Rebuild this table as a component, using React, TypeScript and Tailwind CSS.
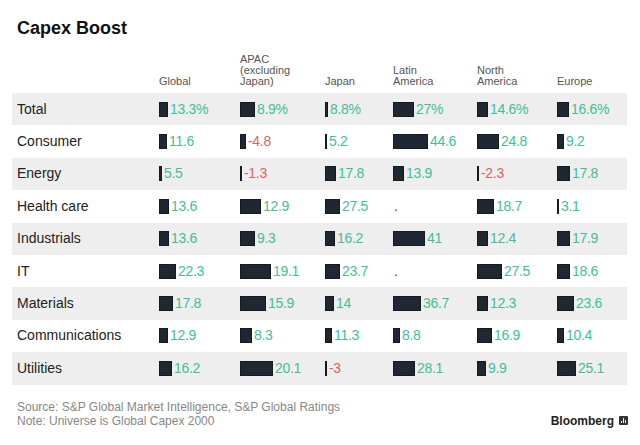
import React from "react";

type Cell = { v: string; w: number; neg?: boolean; dot?: boolean };

const rows: { label: string; cells: Cell[] }[] = [
  { label: "Total", cells: [{ v: "13.3%", w: 9 }, { v: "8.9%", w: 15 }, { v: "8.8%", w: 3 }, { v: "27%", w: 21 }, { v: "14.6%", w: 11 }, { v: "16.6%", w: 12 }] },
  { label: "Consumer", cells: [{ v: "11.6", w: 8 }, { v: "-4.8", w: 6, neg: true }, { v: "5.2", w: 2 }, { v: "44.6", w: 35 }, { v: "24.8", w: 22 }, { v: "9.2", w: 7 }] },
  { label: "Energy", cells: [{ v: "5.5", w: 3 }, { v: "-1.3", w: 2, neg: true }, { v: "17.8", w: 11 }, { v: "13.9", w: 11 }, { v: "-2.3", w: 2, neg: true }, { v: "17.8", w: 13 }] },
  { label: "Health care", cells: [{ v: "13.6", w: 10 }, { v: "12.9", w: 21 }, { v: "27.5", w: 15 }, { v: ".", w: 0, dot: true }, { v: "18.7", w: 17 }, { v: "3.1", w: 2 }] },
  { label: "Industrials", cells: [{ v: "13.6", w: 10 }, { v: "9.3", w: 15 }, { v: "16.2", w: 10 }, { v: "41", w: 32 }, { v: "12.4", w: 11 }, { v: "17.9", w: 13 }] },
  { label: "IT", cells: [{ v: "22.3", w: 17 }, { v: "19.1", w: 31 }, { v: "23.7", w: 15 }, { v: ".", w: 0, dot: true }, { v: "27.5", w: 25 }, { v: "18.6", w: 13 }] },
  { label: "Materials", cells: [{ v: "17.8", w: 14 }, { v: "15.9", w: 26 }, { v: "14", w: 9 }, { v: "36.7", w: 28 }, { v: "12.3", w: 11 }, { v: "23.6", w: 17 }] },
  { label: "Communications", cells: [{ v: "12.9", w: 9 }, { v: "8.3", w: 12 }, { v: "11.3", w: 7 }, { v: "8.8", w: 7 }, { v: "16.9", w: 15 }, { v: "10.4", w: 7 }] },
  { label: "Utilities", cells: [{ v: "16.2", w: 13 }, { v: "20.1", w: 33 }, { v: "-3", w: 2, neg: true }, { v: "28.1", w: 22 }, { v: "9.9", w: 9 }, { v: "25.1", w: 19 }] },
];

const headers: string[][] = [
  ["Global"],
  ["APAC", "(excluding", "Japan)"],
  ["Japan"],
  ["Latin", "America"],
  ["North", "America"],
  ["Europe"],
];

const grid = "grid grid-cols-[147px_81px_85px_68px_84px_80px_70px]";

function ValueCell({ c }: { c: Cell }) {
  if (c.dot) {
    return <div className="flex items-center h-full text-[14px] text-[#444] pl-[1px]">.</div>;
  }
  return (
    <div className="flex items-center h-full">
      <div className="h-[15px] bg-[#1f2832] border border-[#141a20] shrink-0" style={{ width: Math.max(c.w, 2) }} />
      <span className={`ml-[2px] text-[14px] tracking-[-0.3px] ${c.neg ? "text-[#e0625a]" : "text-[#42bf98]"}`}>{c.v}</span>
    </div>
  );
}

export default function App() {
  return (
    <div className="w-[640px] h-[445px] bg-white overflow-hidden font-['Liberation_Sans',Arial,sans-serif] relative">
      <div className="pl-[17px] pt-[15px] text-[18px] leading-[26px] font-bold text-[#111]">Capex Boost</div>
      <div className={`${grid} ml-[12px] w-[615px] h-[47px] items-end pb-[1px]`}>
        <div />
        {headers.map((h, i) => (
          <div key={i} className="text-[11px] leading-[11px] text-[#555] flex flex-col">
            {h.map((l) => (
              <span key={l}>{l}</span>
            ))}
          </div>
        ))}
      </div>
      <div className="ml-[12px] w-[615px] mt-[5px]">
        {rows.map((r, i) => (
          <div key={r.label} className={`${grid} h-[32.4px] ${i % 2 === 0 ? "bg-[#eeeeee]" : "bg-white"}`}>
            <div className="flex items-center pl-[5px] text-[14px] text-[#222]">{r.label}</div>
            {r.cells.map((c, j) => (
              <ValueCell key={j} c={c} />
            ))}
          </div>
        ))}
      </div>
      <div className="flex items-end justify-between pl-[17px] pr-[12px] mt-[15px]">
        <div className="text-[12px] leading-[14px] text-[#888]">
          <div>Source: S&amp;P Global Market Intelligence, S&amp;P Global Ratings</div>
          <div>Note: Universe is Global Capex 2000</div>
        </div>
        <div className="flex items-center gap-[5px] text-[12px] leading-[14px] font-bold text-[#222]">
          <span>Bloomberg</span>
          <svg width="9" height="9" viewBox="0 0 9 9">
            <rect x="0" y="0" width="9" height="9" rx="1" fill="#333" />
            <rect x="2" y="5" width="1" height="2" fill="#fff" />
            <rect x="4" y="2" width="1" height="5" fill="#fff" />
            <rect x="6" y="4" width="1" height="3" fill="#fff" />
          </svg>
        </div>
      </div>
    </div>
  );
}
